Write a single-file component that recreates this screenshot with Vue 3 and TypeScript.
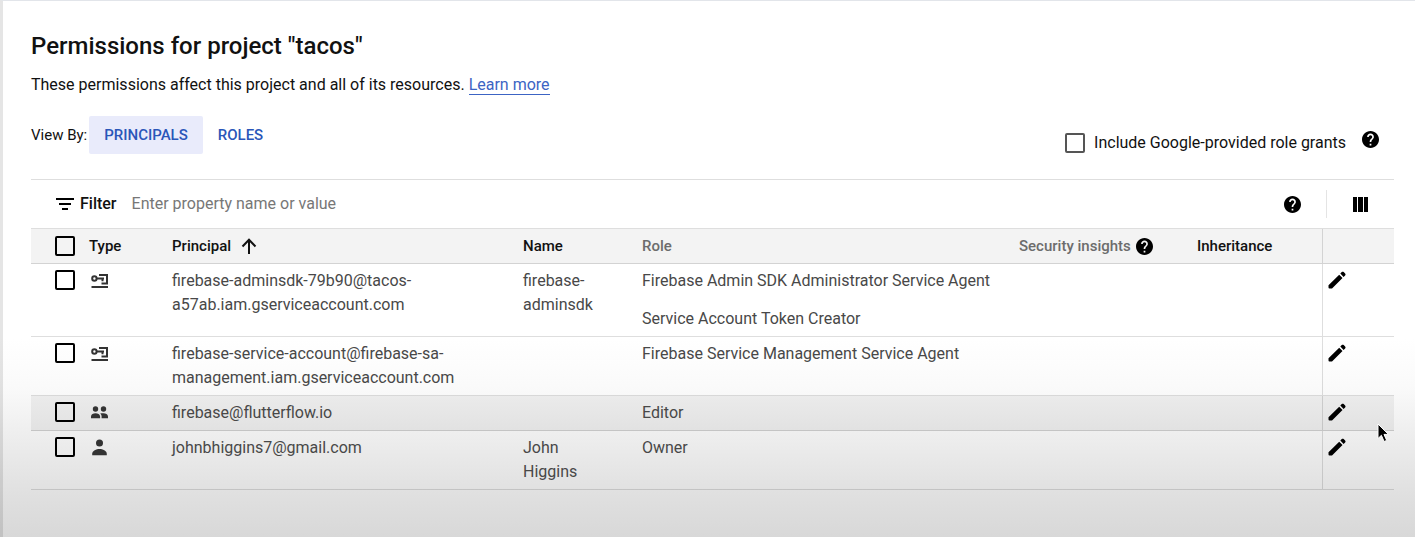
<script setup lang="ts">
import { ref } from 'vue'

interface Principal {
  id: string
  kind: 'service' | 'group' | 'user'
  principal: string[]
  name: string
  roles: string[]
  hovered?: boolean
}

const rows: Principal[] = [
  {
    id: 'adminsdk',
    kind: 'service',
    principal: ['firebase-adminsdk-79b90@tacos-', 'a57ab.iam.gserviceaccount.com'],
    name: 'firebase-adminsdk',
    roles: ['Firebase Admin SDK Administrator Service Agent', 'Service Account Token Creator'],
  },
  {
    id: 'management',
    kind: 'service',
    principal: ['firebase-service-account@firebase-sa-', 'management.iam.gserviceaccount.com'],
    name: '',
    roles: ['Firebase Service Management Service Agent'],
  },
  {
    id: 'flutterflow',
    kind: 'group',
    principal: ['firebase@flutterflow.io'],
    name: '',
    roles: ['Editor'],
    hovered: true,
  },
  {
    id: 'john',
    kind: 'user',
    principal: ['johnbhiggins7@gmail.com'],
    name: 'John Higgins',
    roles: ['Owner'],
  },
]

const view = ref<'principals' | 'roles'>('principals')
const filter = ref('')
const includeGrants = ref(false)
const selected = ref<string[]>([])
const helpPath =
  'M12 2C6.48 2 2 6.48 2 12s4.48 10 10 10 10-4.48 10-10S17.52 2 12 2zm1 17h-2v-2h2v2zm2.07-7.75l-.9.92C13.45 12.9 13 13.5 13 15h-2v-.5c0-1.1.45-2.1 1.17-2.83l1.24-1.26c.37-.36.59-.86.59-1.41 0-1.1-.9-2-2-2s-2 .9-2 2H8c0-2.21 1.79-4 4-4s4 1.79 4 4c0 .88-.36 1.68-.93 2.25z'

function toggleAll(event: Event) {
  selected.value = (event.target as HTMLInputElement).checked ? rows.map((r) => r.id) : []
}
</script>

<template>
  <main class="page">
    <h1 class="title">Permissions for project "tacos"</h1>
    <p class="intro">
      These permissions affect this project and all of its resources.
      <a class="link" href="#">Learn more</a>
    </p>

    <div class="controls">
      <div class="view-by">
        <span class="view-label">View By:</span>
        <button type="button" class="tab" :class="{ active: view === 'principals' }" @click="view = 'principals'">PRINCIPALS</button>
        <button type="button" class="tab" :class="{ active: view === 'roles' }" @click="view = 'roles'">ROLES</button>
      </div>
      <div class="grants">
        <label class="grants-label">
          <input v-model="includeGrants" class="check soft" type="checkbox" />
          Include Google-provided role grants
        </label>
        <button type="button" class="icon-button grants-help" aria-label="About role grants">
          <svg class="help" viewBox="2 2 20 20"><path :d="helpPath" /></svg>
        </button>
      </div>
    </div>

    <div class="filter-bar">
      <label class="filter-label" for="filter">
        <svg class="filter-icon" viewBox="0 0 18 14"><path d="M0 1h18v2H0zM3 6h12v2H3zM6 11h6v2H6z" /></svg>
        Filter
      </label>
      <input id="filter" v-model="filter" class="filter-input" type="text" placeholder="Enter property name or value" />
      <button type="button" class="icon-button" aria-label="Filter help">
        <svg class="help" viewBox="2 2 20 20"><path :d="helpPath" /></svg>
      </button>
      <span class="divider"></span>
      <button type="button" class="icon-button columns" aria-label="Column display options">
        <svg class="columns-icon" viewBox="0 0 15 15"><path d="M0 0h4v15H0zM5 0h5v15H5zM11 0h4v15h-4z" /></svg>
      </button>
    </div>

    <table class="grid">
      <colgroup>
        <col class="c-check" />
        <col class="c-type" />
        <col class="c-principal" />
        <col class="c-name" />
        <col />
        <col class="c-insights" />
        <col class="c-inherit" />
        <col class="c-edit" />
      </colgroup>
      <thead>
        <tr>
          <th class="check-cell" scope="col">
            <input class="check" type="checkbox" aria-label="Select all principals" :checked="selected.length === rows.length" @change="toggleAll" />
          </th>
          <th scope="col">Type</th>
          <th scope="col">
            <span class="head-flex sort">
              Principal
              <svg class="sort-icon" viewBox="0 0 16 16"><path d="M8 16V2M1.500 8.500 8 1.700l6.500 6.800" /></svg>
            </span>
          </th>
          <th scope="col">Name</th>
          <th scope="col" class="muted">Role</th>
          <th scope="col" class="muted">
            <span class="head-flex insights">
              Security insights
              <svg class="help" viewBox="2 2 20 20"><path :d="helpPath" /></svg>
            </span>
          </th>
          <th scope="col">Inheritance</th>
          <th class="edit-cell"></th>
        </tr>
      </thead>
      <tbody>
        <tr v-for="row in rows" :key="row.id" :class="{ hovered: row.hovered }">
          <td class="check-cell">
            <input v-model="selected" class="check" type="checkbox" :value="row.id" :aria-label="`Select ${row.principal.join('')}`" />
          </td>
          <td class="type-cell">
            <svg v-if="row.kind === 'service'" class="type-icon" viewBox="0 0 20 18">
              <g fill="none" stroke="currentColor" stroke-width="2">
                <circle cx="5.400" cy="7.500" r="2.200" />
                <path d="M7.600 7.500H15M13.500 7.500v2.800M10 4h8v8.500h-5.500M2.500 16H19" />
              </g>
            </svg>
            <svg v-else-if="row.kind === 'group'" class="type-icon" viewBox="0 0 20 18">
              <g fill="currentColor">
                <circle cx="6.500" cy="6" r="2.700" />
                <circle cx="14.500" cy="6" r="2.700" />
                <path d="M2 15.200v-1.700c0-2.200 2.400-3.200 4.500-3.200s4.600 1 4.600 3.200v1.700zM12.600 15.200v-1.900c0-1.100-.6-2.100-1.500-2.800 1-.2 2.200-.2 3.400-.2 2.100 0 4.500 1 4.500 3.200v1.700z" />
              </g>
            </svg>
            <svg v-else class="type-icon" viewBox="0 0 20 18">
              <g fill="currentColor">
                <circle cx="10.500" cy="5" r="3.500" />
                <path d="M3.200 17.300v-1.500c0-3 4.200-4.800 7.300-4.800s7.300 1.800 7.300 4.800v1.500z" />
              </g>
            </svg>
          </td>
          <td>
            <template v-for="(part, i) in row.principal" :key="part"><br v-if="i > 0" />{{ part }}</template>
          </td>
          <td class="name-cell">{{ row.name }}</td>
          <td>
            <div v-for="role in row.roles" :key="role" class="role">{{ role }}</div>
          </td>
          <td></td>
          <td></td>
          <td class="edit-cell">
            <button type="button" class="icon-button" :aria-label="`Edit ${row.principal.join('')}`">
              <svg class="edit-icon" viewBox="0 0 18 18">
                <path d="M.5 14.200 11.200 3.700l3.300 3.200L4 17.500H1.500a1 1 0 0 1-1-1zM12.300 2.600l1.500-1.500c.6-.6 1.300-.6 1.900 0l1.400 1.400c.6.6.6 1.300 0 1.900L15.600 5.900z" />
              </svg>
            </button>
          </td>
        </tr>
      </tbody>
    </table>

    <svg class="pointer" viewBox="0 0 12 20" aria-hidden="true">
      <path d="M1 1v14.500l3.400-3.200 2.700 6.200 2.600-1.100-2.700-6H11.500z" />
    </svg>
  </main>
</template>

<style>
body {
  margin: 0;
}
</style>

<style scoped>
.page {
  position: relative;
  box-sizing: border-box;
  min-height: 100vh;
  padding: 29px 21px 24px 28px;
  border-top: 1px solid #e2e5ea;
  border-left: 3px solid rgba(0, 0, 0, 0.1);
  background: linear-gradient(#fff 63%, #fafafa 72%, #efefef 80%, #e0e0e0 92%, #d8d8d8 100%);
  color: #111;
  font-family: Roboto, "Liberation Sans", sans-serif;
  font-size: 16px;
  line-height: 24px;
}

.title {
  margin: 0;
  font-size: 24px;
  font-weight: 500;
  line-height: 32px;
}

.intro {
  margin: 11px 0 0;
}

.link {
  color: #3c64c4;
  border-bottom: 1px solid #3c64c4;
  text-decoration: none;
}

.controls {
  display: flex;
  justify-content: space-between;
  align-items: flex-start;
  height: 63px;
  margin-top: 19px;
}

.view-by {
  display: flex;
  align-items: center;
}

.view-label {
  margin-right: 2px;
  font-size: 15px;
}

.tab {
  height: 38px;
  padding: 0 15px;
  border: 0;
  border-radius: 2px;
  background: transparent;
  color: #2a56b9;
  font: 500 15px/24px Roboto, "Liberation Sans", sans-serif;
}

.tab.active {
  background: #e9ebfb;
}

.grants {
  display: flex;
  align-items: flex-start;
  gap: 16px;
  padding: 15px 15px 0 0;
}

.grants-label {
  display: flex;
  align-items: center;
  gap: 9px;
}

.check {
  flex: none;
  box-sizing: border-box;
  appearance: none;
  display: block;
  width: 20px;
  height: 20px;
  margin: 0;
  border: 2px solid #000;
  border-radius: 2px;
}

.check.soft {
  border-color: #555;
}

.check:checked {
  background: #2a56b9;
}

.icon-button {
  display: block;
  padding: 0;
  border: 0;
  background: transparent;
  color: #000;
}

.help {
  display: block;
  width: 17px;
  height: 17px;
  fill: #000;
}

.filter-bar {
  display: flex;
  align-items: center;
  height: 48px;
  padding: 0 26px 0 25px;
  border-top: 1px solid #dedede;
}

.filter-label {
  display: flex;
  align-items: center;
  gap: 6px;
  font-weight: 500;
}

.filter-icon {
  width: 18px;
  height: 14px;
}

.filter-input {
  flex: 1;
  min-width: 0;
  margin-left: 15px;
  padding: 0;
  border: 0;
  outline: 0;
  background: transparent;
  color: #111;
  font: 400 16px/24px Roboto, "Liberation Sans", sans-serif;
}

.filter-input::placeholder {
  color: #777;
  opacity: 1;
}

.divider {
  width: 1px;
  height: 28px;
  margin: 0 26px 0 25px;
  background: #e4e4e4;
}

.columns-icon {
  display: block;
  width: 15px;
  height: 15px;
}

.grid {
  width: 100%;
  border-collapse: separate;
  border-spacing: 0;
  border-top: 1px solid #dedede;
  table-layout: fixed;
}

.c-check {
  width: 58px;
}

.c-type {
  width: 83px;
}

.c-principal {
  width: 351px;
}

.c-name {
  width: 119px;
}

.c-insights {
  width: 178px;
}

.c-inherit {
  width: 125px;
}

.c-edit {
  width: 72px;
}

.grid th,
.grid td {
  padding: 5px 0;
  border-bottom: 1px solid rgba(0, 0, 0, 0.13);
  text-align: left;
  vertical-align: top;
}

.grid th {
  background: #f3f3f3;
  font-size: 15px;
  font-weight: 500;
}

.grid th.muted {
  color: #6c6c6c;
}

.grid td {
  color: #484848;
}

.grid .check-cell {
  padding: 7px 0 0 24px;
}

.grid td.check-cell {
  padding-top: 6px;
}

.grid .type-cell {
  padding-top: 7px;
}

.grid .name-cell {
  padding-right: 40px;
}

.grid .edit-cell {
  padding: 7px 0 0 5px;
  border-left: 1px solid rgba(0, 0, 0, 0.13);
}

.hovered td {
  background: rgba(0, 0, 0, 0.05);
}

.head-flex {
  display: flex;
  align-items: center;
}

.insights {
  gap: 5px;
}

.sort {
  gap: 10px;
}

.sort-icon {
  width: 16px;
  height: 16px;
  fill: none;
  stroke: #111;
  stroke-width: 2;
}

.type-icon {
  display: block;
  width: 20px;
  height: 18px;
  color: #333;
}

.role + .role {
  margin-top: 14px;
}

.edit-icon {
  display: block;
  width: 18px;
  height: 18px;
}

.pointer {
  position: absolute;
  top: 422px;
  right: 26px;
  width: 12px;
  height: 20px;
  stroke: #fff;
  stroke-width: 1;
  pointer-events: none;
}
</style>
